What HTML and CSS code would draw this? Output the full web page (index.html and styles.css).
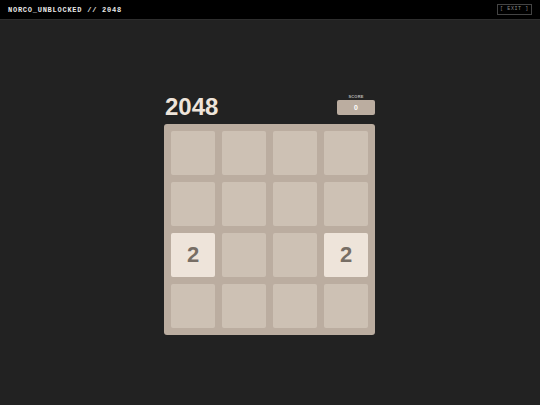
FILE: index.html
```html
<!DOCTYPE html>
<html>
<head>
<meta charset="utf-8">
<link rel="stylesheet" href="styles.css">
</head>
<body>
<header class="topbar">
  <span class="brand">NORCO_UNBLOCKED // 2048</span>
  <button class="exit">[ EXIT ]</button>
</header>
<main class="game">
  <div class="heading">
    <h1 class="title">2048</h1>
    <div class="score">
      <div class="score-label">SCORE</div>
      <div class="score-box">0</div>
    </div>
  </div>
  <div class="board">
    <div class="cell"></div><div class="cell"></div><div class="cell"></div><div class="cell"></div>
    <div class="cell"></div><div class="cell"></div><div class="cell"></div><div class="cell"></div>
    <div class="cell tile">2</div><div class="cell"></div><div class="cell"></div><div class="cell tile">2</div>
    <div class="cell"></div><div class="cell"></div><div class="cell"></div><div class="cell"></div>
  </div>
</main>
</body>
</html>
```
FILE: styles.css
```css
html, body {
  margin: 0;
  padding: 0;
  background: #222222;
  font-family: "Liberation Sans", Arial, sans-serif;
}
.topbar {
  height: 20px;
  box-sizing: border-box;
  background: #000;
  border-bottom: 1px solid #2e2e2e;
  display: flex;
  align-items: center;
  justify-content: space-between;
  padding: 0 8px 0 8px;
}
.brand {
  font-family: "Liberation Mono", "Courier New", monospace;
  font-weight: bold;
  font-size: 7px;
  letter-spacing: 0.75px;
  color: #e8e8e8;
}
.exit {
  font-family: "Liberation Mono", "Courier New", monospace;
  font-size: 5px;
  letter-spacing: 0.6px;
  color: #8a8a8a;
  background: transparent;
  border: 1px solid #444;
  width: 35px;
  height: 11px;
  padding: 0;
  margin: 0;
  line-height: 9px;
}
.game {
  width: 211px;
  margin-left: calc(50% - 106px);
  padding-top: 74px;
}
.heading {
  display: flex;
  justify-content: space-between;
  align-items: flex-end;
  margin-bottom: 5px;
}
.title {
  margin: 0 0 0 1px;
  font-size: 24px;
  line-height: 24px;
  font-weight: bold;
  color: #eee4da;
}
.score {
  display: flex;
  flex-direction: column;
  align-items: center;
  margin-bottom: 4px;
}
.score-label {
  font-size: 4px;
  line-height: 5px;
  font-weight: bold;
  color: #b8b8b8;
  margin-bottom: 1px;
  letter-spacing: 0.2px;
}
.score-box {
  width: 38px;
  height: 15px;
  background: #bbada0;
  border-radius: 2px;
  color: #fff;
  font-size: 7px;
  font-weight: bold;
  line-height: 15px;
  text-align: center;
}
.board {
  background: #bbada0;
  border-radius: 3px;
  padding: 7px;
  display: grid;
  grid-template-columns: repeat(4, 44px);
  grid-auto-rows: 44px;
  gap: 7px;
}
.cell {
  background: #cdc1b4;
  border-radius: 2px;
}
.tile {
  background: #eee4da;
  color: #776e65;
  font-size: 22px;
  font-weight: bold;
  display: flex;
  align-items: center;
  justify-content: center;
}
```
